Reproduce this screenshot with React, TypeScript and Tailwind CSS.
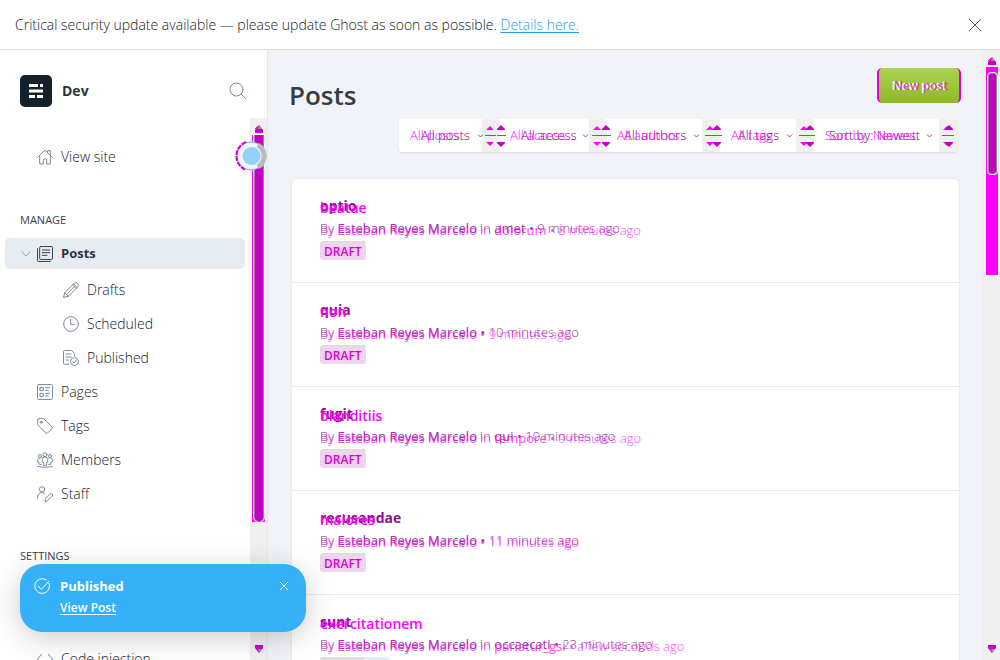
import type { ReactNode } from "react";

type IconProps = { children: ReactNode; className?: string };

function Icon({ children, className = "" }: IconProps) {
  return (
    <svg
      viewBox="0 0 24 24"
      className={`size-4 shrink-0 ${className}`}
      fill="none"
      stroke="currentColor"
      strokeWidth="1.5"
      strokeLinecap="round"
      strokeLinejoin="round"
      aria-hidden="true"
    >
      {children}
    </svg>
  );
}

const icons = {
  home: (
    <Icon>
      <path d="M1 12.5 12 1.8 23 12.5M4 11v11.5h5.5V17a2.5 2.5 0 0 1 5 0v5.5H20V11M16 4V2.5h4V8" />
    </Icon>
  ),
  posts: (
    <Icon className="text-[#394047]">
      <rect x="4" y=".8" width="19.2" height="19.4" rx="1.5" />
      <path d="M.8 4v17.6a1.6 1.6 0 0 0 1.6 1.6H20M8 6h11M8 10h11M8 14h7" />
    </Icon>
  ),
  pencil: (
    <Icon>
      <path d="m1 23 1.5-7L17 1.8a3 3 0 0 1 4.2 0l1 1a3 3 0 0 1 0 4.2L8 21.5 1 23Zm1.5-7L8 21.5M14.5 4.3l5.2 5.2M17 6.8 5.5 18.5M16 3l5.5 5.5" />
    </Icon>
  ),
  clock: (
    <Icon>
      <circle cx="12" cy="12" r="11" />
      <path d="M11.5 5v7.5H17" />
    </Icon>
  ),
  published: (
    <Icon>
      <path d="M8.5 21.5H2.3A1.5 1.5 0 0 1 .8 20V2.3A1.5 1.5 0 0 1 2.3.8H13l4 4V9M4.5 6H12M4.5 10.5h8M4.5 15H8" />
      <circle cx="17.3" cy="17.3" r="6" />
      <path d="m14.5 17.5 2 2 3.7-4.3" />
    </Icon>
  ),
  pages: (
    <Icon>
      <rect x=".8" y=".8" width="22.4" height="22.4" rx="1.5" />
      <path d="M5 5.5h4.500V10H5zM5 14h4.500v4.500H5zM13 5.500h6M13 9.500h4M13 14h6M13 18h4" />
    </Icon>
  ),
  tag: (
    <Icon>
      <path d="M1 2.300v7.500c0 .5.200 1 .6 1.300L13.500 22.700a1.500 1.500 0 0 0 2.100 0l7-7a1.500 1.500 0 0 0 0-2.100L10.800 1.500A2 2 0 0 0 9.400.9H2.300A1.400 1.400 0 0 0 1 2.300Z" />
      <circle cx="6.3" cy="6.3" r="1.6" />
    </Icon>
  ),
  members: (
    <Icon>
      <circle cx="12" cy="4" r="3" />
      <circle cx="4.5" cy="6" r="2.3" />
      <circle cx="19.5" cy="6" r="2.3" />
      <path d="M9.800 19.500 9.300 15H8v-3.500a4 4 0 0 1 8 0V15h-1.300l-.5 4.500ZM6.500 18.500H3.300L2.800 15H1v-3a3.500 3.500 0 0 1 5.500-2.800M17.500 18.500h3.200l.5-3.500H23v-3a3.500 3.500 0 0 0-5.500-2.800M1 21.500c5 2 17 2 22 0" />
    </Icon>
  ),
  staff: (
    <Icon>
      <circle cx="7.5" cy="5" r="4" />
      <path d="M.8 18v-1.500a6.700 6.700 0 0 1 11-5.200M12 23l.8-4 7-7a2 2 0 0 1 3 3l-7 7Z" />
    </Icon>
  ),
  code: (
    <Icon>
      <path d="m7 5-6.200 7L7 19M17 5l6.200 7-6.200 7" />
    </Icon>
  ),
};

function Arrow({ up = false }: { up?: boolean }) {
  return (
    <svg width="10" height="8" viewBox="0 0 10 8" aria-hidden="true" className="shrink-0">
      <path d={up ? "M1 5 5 0l4 5v3H1Z" : "M1 0h8v3L5 8 1 3Z"} fill="#c400c4" />
      <path d={up ? "M5 0 8 4H4Z" : "M5 8 4 4h4Z"} fill="#999" />
      <path d={up ? "m1 4 3-3" : "m1 1 3 4"} stroke="#f0f" />
    </svg>
  );
}

function SideLink({
  icon,
  label,
  nested = false,
}: {
  icon: ReactNode;
  label: string;
  nested?: boolean;
}) {
  return (
    <li>
      <a
        href="#"
        className={`flex h-[34px] items-center gap-2 text-[#7c8b9a] ${nested ? "pl-[63px]" : "pl-[37px]"}`}
      >
        {icon}
        <span className="text-sm font-light text-[#15212a]">{label}</span>
      </a>
    </li>
  );
}

function Sidebar() {
  return (
    <aside className="flex w-[268px] shrink-0 flex-col border-r border-[#e3e6ec] bg-white">
      <div className="flex h-[68px] shrink-0 items-center px-5 pt-3.5">
        <svg viewBox="0 0 32 32" className="size-8" aria-hidden="true">
          <rect width="32" height="32" rx="5" fill="#15212a" />
          <path d="M9 9h9v3H9zm11 0h3v3h-3zM9 14.500h14v3H9zM9 20h6v3H9zm8 0h6v3h-6z" fill="#fff" />
        </svg>
        <span className="ml-2.5 flex-1 text-sm font-bold text-[#2c353d]">Dev</span>
        <button aria-label="Search" className="text-[#7c8b9a]">
          <svg
            viewBox="0 0 18 18"
            className="size-[18px]"
            fill="none"
            stroke="currentColor"
            strokeLinecap="round"
          >
            <circle cx="7.5" cy="7.5" r="6.5" />
            <path d="m12.300 12.300 4.500 4.500" />
          </svg>
        </button>
      </div>
      <div className="flex min-h-0 flex-1">
        <nav className="min-w-0 flex-1 overflow-hidden pt-[22px]">
          <ul>
            <SideLink icon={icons.home} label="View site" />
          </ul>
          <h2 className="pt-9 pb-2 pl-5 text-[11px] leading-5 text-[#394047]">MANAGE</h2>
          <ul>
            <li className="px-[5px] pb-1">
              <a
                href="#"
                className="flex h-[31px] items-center rounded-[5px] bg-[#e6eaf1] pl-4 font-bold text-[#2c353d]"
              >
                <svg
                  viewBox="0 0 10 6"
                  className="mr-1.5 h-1.5 w-2.5"
                  fill="none"
                  stroke="#9ba8b3"
                  aria-hidden="true"
                >
                  <path d="m.5.500 4.500 4.500L9.500.5" />
                </svg>
                {icons.posts}
                <span className="ml-2">Posts</span>
              </a>
            </li>
            <SideLink nested icon={icons.pencil} label="Drafts" />
            <SideLink nested icon={icons.clock} label="Scheduled" />
            <SideLink nested icon={icons.published} label="Published" />
            <SideLink icon={icons.pages} label="Pages" />
            <SideLink icon={icons.tag} label="Tags" />
            <SideLink icon={icons.members} label="Members" />
            <SideLink icon={icons.staff} label="Staff" />
          </ul>
          <h2 className="pt-[35px] pb-[76px] pl-5 text-[11px] leading-5 text-[#394047]">SETTINGS</h2>
          <ul>
            <SideLink icon={icons.code} label="Code injection" />
          </ul>
        </nav>
        <div className="relative flex w-[17px] flex-col items-center bg-[#f0f0f0] pt-[7px] pb-[7px]">
          <Arrow up />
          <div className="mt-0.5 flex h-[387px] w-[13px] shrink-0 justify-end bg-[#f0f] pr-px">
            <div className="w-[10px] rounded-b-full border-x border-b border-[#8a8a8a] bg-[#c400c4] outline outline-white" />
          </div>
          <div className="flex-1" />
          <Arrow />
          <svg
            viewBox="0 0 32 32"
            className="absolute top-[22px] left-[-15px] size-8"
            aria-hidden="true"
          >
            <circle cx="18" cy="16" r="13.5" fill="#aaa" />
            <circle cx="16" cy="16" r="14" fill="#f2f2f2" stroke="#5fbdf0" />
            <path d="M23 5a13 13 0 0 1 0 22" fill="none" stroke="#bbb" strokeWidth="5" />
            <path
              d="M11 2a15 15 0 0 0 0 28"
              fill="none"
              stroke="#d800d8"
              strokeWidth="2"
              strokeDasharray="5 1"
            />
            <circle cx="16.5" cy="16" r="9" fill="#92d2fa" />
          </svg>
        </div>
      </div>
    </aside>
  );
}

const filters = [
  { label: "All posts", cell: "w-[101px]", text: "pl-[22px]", ghost: "left-[11px]", chevron: "right-4", shift: 11 },
  { label: "All access", cell: "w-[107px]", text: "pl-[21px]", ghost: "left-[10px]", chevron: "right-[18px]", shift: 9 },
  { label: "All authors", cell: "w-[113px]", text: "pl-[17px]", ghost: "left-[10px]", chevron: "right-5", shift: 7 },
  { label: "All tags", cell: "w-[94px]", text: "pl-[18px]", ghost: "left-[11px]", chevron: "right-[21px]", shift: 6 },
  { label: "Sort by: Newest", cell: "w-[143px]", text: "pl-[15px]", ghost: "left-[11px]", chevron: "right-6", shift: 2 },
];

function Filters() {
  return (
    <div className="flex h-[33px] rounded-[3px] bg-white shadow-[0_1px_2px_rgba(0,0,0,0.1)]">
      {filters.map((f) => (
        <div key={f.label} className={`relative flex ${f.cell}`}>
          <select
            aria-label={f.label}
            className={`min-w-0 flex-1 appearance-none text-[13px] font-light text-[#70007a] ${f.text}`}
          >
            <option>{f.label}</option>
          </select>
          <div className="w-[18px] rounded-r-[3px] bg-[#f0f0f0]" />
          <span
            aria-hidden="true"
            className={`pointer-events-none absolute top-0 text-[13px] leading-[33px] font-light whitespace-nowrap text-[#f0f] ${f.ghost}`}
          >
            {f.label}
          </span>
          <svg
            width="7"
            height="4"
            viewBox="0 0 7 4"
            className={`pointer-events-none absolute top-[15px] ${f.chevron}`}
            fill="none"
            stroke="#b030b0"
            aria-hidden="true"
          >
            <path d="m1 .5 2.500 2.500L6 .5" />
          </svg>
          <svg
            width="24"
            height="24"
            viewBox="0 0 24 24"
            className="pointer-events-none absolute top-1.5 right-[-9px] z-10"
            aria-hidden="true"
          >
            <path d="m1 5 4-4 4 4Zm0 12h8l-4 4Z" fill="#f0f" />
            <path d="M0 10.500h11" stroke="#f0f" />
            <g transform={`translate(${f.shift} 0)`}>
              <path d="M1 5V4l4-4 4 4v1Zm0 12h8v1l-4 4-4-4Z" fill="#c400c4" />
              <path d="M1 10.500h9" stroke="#b040b0" />
            </g>
          </svg>
        </div>
      ))}
    </div>
  );
}

type Line = { tag?: string; time: string };

const posts: { title: string; ghost: string; meta: Line; ghostMeta: Line }[] = [
  { title: "optio", ghost: "beatae", meta: { tag: "amet", time: "9 minutes ago" }, ghostMeta: { tag: "dolorum", time: "8 minutes ago" } },
  { title: "quia", ghost: "non", meta: { time: "10 minutes ago" }, ghostMeta: { time: "9 minutes ago" } },
  { title: "fugit", ghost: "blanditiis", meta: { tag: "qui", time: "10 minutes ago" }, ghostMeta: { tag: "tempore", time: "9 minutes ago" } },
  { title: "recusandae", ghost: "maiores", meta: { time: "11 minutes ago" }, ghostMeta: { time: "11 minutes ago" } },
  { title: "sunt", ghost: "exercitationem", meta: { tag: "occaecati", time: "23 minutes ago" }, ghostMeta: { tag: "pariatur_gsi", time: "a few seconds ago" } },
];

function Byline({ line }: { line: Line }) {
  return (
    <>
      By <span className="font-normal">Esteban Reyes Marcelo</span>{" "}
      {line.tag && (
        <>
          in <span className="font-normal">{line.tag}</span>{" "}
        </>
      )}
      <span className="font-normal">•</span> {line.time}
    </>
  );
}

function PostList() {
  return (
    <ul className="mt-[27px] mr-px ml-[3px] rounded-[5px] bg-white shadow-[0_0_2px_rgba(0,0,0,0.12)]">
      {posts.map((p, i) => (
        <li key={p.title} className="h-[104px] border-b border-[#e3ebf3] px-7 pt-4">
          <div className="relative">
            <h3 className="text-sm leading-[22px] font-bold text-[#8a108c]">{p.title}</h3>
            <p className="text-[13px] leading-[22px] font-light text-[#904094]">
              <Byline line={p.meta} />
            </p>
            <div aria-hidden="true" className="absolute top-0.5 left-0 whitespace-nowrap text-[#f0f]">
              <div className="text-sm leading-[22px] font-semibold">{p.ghost}</div>
              <div className="text-[13px] leading-[22px] font-light opacity-75">
                <Byline line={p.ghostMeta} />
              </div>
            </div>
          </div>
          {i < 4 ? (
            <span className="mt-0.5 inline-block rounded-[3px] border-t-2 border-[#dddddf] bg-[#eed4ee] px-1 text-xs leading-[17px] font-semibold text-[#d800d8]">
              DRAFT
            </span>
          ) : (
            <div className="mt-0.5 flex h-[19px] w-[70px] rounded-[3px] bg-[#e5eef6]">
              <div className="w-[45px] rounded-[3px] bg-[#dddddf]" />
            </div>
          )}
        </li>
      ))}
    </ul>
  );
}

function Toast() {
  return (
    <div
      role="status"
      className="absolute bottom-7 left-5 z-20 flex h-[68px] w-[286px] rounded-[22px] bg-[#35b1f9] px-3.5 pt-[11px] text-[13px] leading-[22px] text-white shadow-[0_6px_30px_rgba(0,0,0,0.2)]"
    >
      <Icon className="mt-[3px]">
        <path d="M22.500 8a11 11 0 1 1-4-5M6 12l5 5L22 5" />
      </Icon>
      <div className="ml-2.5 flex-1">
        <div className="font-bold">Published</div>
        <a href="#" className="block text-xs leading-[22px] font-semibold underline underline-offset-2">
          View Post
        </a>
      </div>
      <button aria-label="Dismiss" className="mr-[3px] flex h-[22px] items-center">
        <svg viewBox="0 0 10 10" className="size-2.5" stroke="currentColor">
          <path d="m1 1 8 8M9 1 1 9" />
        </svg>
      </button>
    </div>
  );
}

export default function App() {
  return (
    <div className="relative flex h-screen flex-col overflow-hidden bg-[#f2f3f8] font-['Open_Sans','Noto_Sans',sans-serif] text-[13px]">
      <div className="flex h-[50px] shrink-0 items-center justify-between border-b border-[#dddfe2] bg-white pr-[18px] pl-[15px] text-[#15212a]">
        <p className="text-sm font-light">
          Critical security update available — please update Ghost as soon as possible.{" "}
          <a href="#" className="text-[#2a9ced] underline underline-offset-2">
            Details here.
          </a>
        </p>
        <button aria-label="Close">
          <svg viewBox="0 0 14 14" className="size-3.5" stroke="#50585f">
            <path d="m1 1 12 12M13 1 1 13" />
          </svg>
        </button>
      </div>
      <div className="flex min-h-0 flex-1">
        <Sidebar />
        <main className="min-w-0 flex-1 overflow-hidden pt-[18px] pr-[22px] pl-[21px]">
          <div className="flex items-start justify-between">
            <h1 className="pt-2.5 text-[26px] leading-[34px] font-semibold text-[#333d46]">Posts</h1>
            <button className="relative mr-[-1px] h-[35px] w-[84px] rounded-[5px] border-x-2 border-[#e000d8] bg-linear-to-b from-[#aad452] to-[#8fb922] text-xs font-semibold text-white">
              New post
              <span
                aria-hidden="true"
                className="absolute inset-0 left-1 flex items-center justify-center text-[#d018b8] opacity-70"
              >
                New post
              </span>
            </button>
          </div>
          <div className="mt-[7px] mr-[3px] flex justify-end">
            <Filters />
          </div>
          <PostList />
        </main>
        <div className="flex w-[18px] shrink-0 flex-col items-center bg-[#f0f0f0] pt-[7px] pb-[7px] pl-0.5">
          <Arrow up />
          <div className="mt-0.5 flex h-[208px] w-3 shrink-0 justify-center bg-[#f0f] pt-1.5">
            <div className="h-[101px] w-[9px] rounded-[3px] border border-[#8a8a8a] bg-[#c400c4] outline outline-white" />
          </div>
          <div className="flex-1" />
          <Arrow />
        </div>
      </div>
      <Toast />
    </div>
  );
}
